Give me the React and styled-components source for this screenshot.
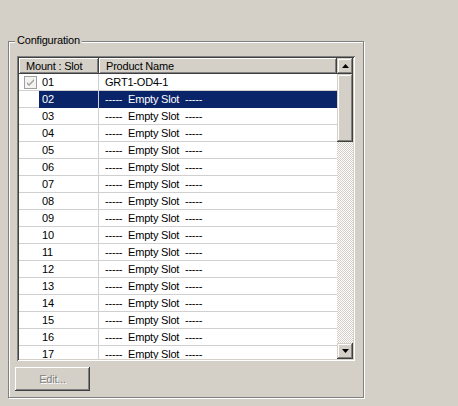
import React from "react";
import styled, { createGlobalStyle } from "styled-components";

const GlobalStyle = createGlobalStyle`
  html, body {
    margin: 0;
    padding: 0;
    background: #d4d0c8;
    width: 458px;
    height: 406px;
    overflow: hidden;
  }
  body {
    font-family: Tahoma, "Liberation Sans", Arial, sans-serif;
    font-size: 11px;
    letter-spacing: -0.2px;
    color: #000;
  }
`;

const slots = [
  { slot: "01", name: "GRT1-OD4-1", checked: true },
  ...Array.from({ length: 16 }, (_, i) => ({
    slot: String(i + 2).padStart(2, "0"),
    name: "-----  Empty Slot  -----",
  })),
];

const raised = `
  box-shadow: inset -1px -1px #404040, inset 1px 1px #d4d0c8,
    inset -2px -2px #808080, inset 2px 2px #fff;
`;

export default function App() {
  const selected = "02";

  return (
    <S.Page>
      <GlobalStyle />
      <S.GroupBox>
        <S.GroupLabel>Configuration</S.GroupLabel>
        <S.ListView>
          <S.ListBody>
            <S.HeaderRow>
              <S.HeaderCell>Mount : Slot</S.HeaderCell>
              <S.HeaderCell>Product Name</S.HeaderCell>
            </S.HeaderRow>
            {slots.map((s) => (
              <S.Row key={s.slot}>
                <S.SlotCell>
                  <S.StateBox>
                    {s.checked && (
                      <svg width="13" height="13" viewBox="0 0 13 13">
                        <rect x="0.5" y="0.5" width="12" height="12" fill="#f4f3f0" stroke="#a0a0a0" />
                        <path d="M3 6 L5 8 L10 3 L10 5 L5 10 L3 8 Z" fill="#a0a0a0" />
                      </svg>
                    )}
                  </S.StateBox>
                  <S.SlotText $selected={s.slot === selected}>{s.slot}</S.SlotText>
                </S.SlotCell>
                <S.NameCell $selected={s.slot === selected}>{s.name}</S.NameCell>
              </S.Row>
            ))}
          </S.ListBody>
          <S.ScrollBar>
            <S.ScrollButton>
              <svg width="7" height="4" viewBox="0 0 7 4">
                <path d="M3.5 0 L7 4 L0 4 Z" fill="#000" />
              </svg>
            </S.ScrollButton>
            <S.Track>
              <S.Thumb />
            </S.Track>
            <S.ScrollButton>
              <svg width="7" height="4" viewBox="0 0 7 4">
                <path d="M0 0 L7 0 L3.5 4 Z" fill="#000" />
              </svg>
            </S.ScrollButton>
          </S.ScrollBar>
        </S.ListView>
        <S.EditButton disabled>Edit...</S.EditButton>
      </S.GroupBox>
    </S.Page>
  );
}

const S = {
  Page: styled.div`
    padding: 41px 0 0 8px;
  `,
  GroupBox: styled.div`
    position: relative;
    box-sizing: border-box;
    width: 356px;
    height: 357px;
    border: 1px solid #808080;
    box-shadow: inset 1px 1px #fff, 1px 1px #fff;
    padding-top: 14px;
    display: flex;
    flex-direction: column;
    align-items: flex-start;
  `,
  GroupLabel: styled.div`
    position: absolute;
    top: -8px;
    left: 6px;
    padding: 0 2px;
    background: #d4d0c8;
    line-height: 13px;
  `,
  ListView: styled.div`
    box-sizing: border-box;
    margin-left: 8px;
    width: 338px;
    height: 305px;
    display: flex;
    background: #fff;
    box-shadow: inset 1px 1px #808080, inset -1px -1px #fff,
      inset 2px 2px #404040, inset -2px -2px #d4d0c8;
    padding: 2px;
  `,
  ListBody: styled.div`
    flex: 1;
    overflow: hidden;
    display: flex;
    flex-direction: column;
  `,
  HeaderRow: styled.div`
    display: grid;
    grid-template-columns: 80px 1fr;
    height: 16px;
    flex-shrink: 0;
  `,
  HeaderCell: styled.div`
    background: #d4d0c8;
    box-shadow: inset -1px -1px #404040, inset 1px 1px #fff,
      inset -2px -2px #808080;
    padding-left: 7px;
    line-height: 16px;
    white-space: nowrap;
    overflow: hidden;
  `,
  Row: styled.div`
    display: grid;
    grid-template-columns: 80px 1fr;
    height: 17px;
    flex-shrink: 0;
    box-sizing: border-box;
    border-bottom: 1px solid #d0d0d0;
  `,
  SlotCell: styled.div`
    display: flex;
    border-right: 1px solid #d0d0d0;
  `,
  StateBox: styled.div`
    width: 20px;
    flex-shrink: 0;
    display: flex;
    align-items: center;
    padding-left: 5px;
    box-sizing: border-box;
    svg {
      display: block;
    }
  `,
  SlotText: styled.div`
    flex: 1;
    padding-left: 3px;
    line-height: 17px;
    background: ${(p) => (p.$selected ? "#0a246a" : "transparent")};
    color: ${(p) => (p.$selected ? "#fff" : "#000")};
  `,
  NameCell: styled.div`
    padding-left: 6px;
    line-height: 17px;
    white-space: pre;
    background: ${(p) => (p.$selected ? "#0a246a" : "transparent")};
    color: ${(p) => (p.$selected ? "#fff" : "#000")};
  `,
  ScrollBar: styled.div`
    width: 16px;
    display: flex;
    flex-direction: column;
  `,
  ScrollButton: styled.div`
    height: 16px;
    flex-shrink: 0;
    background: #d4d0c8;
    ${raised}
    display: flex;
    align-items: center;
    justify-content: center;
    svg {
      display: block;
    }
  `,
  Track: styled.div`
    flex: 1;
    background-image: repeating-conic-gradient(#d4d0c8 0 25%, #fff 0 50%);
    background-size: 2px 2px;
  `,
  Thumb: styled.div`
    height: 68px;
    background: #d4d0c8;
    ${raised}
  `,
  EditButton: styled.button`
    margin: 6px 0 0 6px;
    width: 75px;
    height: 24px;
    border: none;
    background: #d4d0c8;
    box-shadow: inset -1px -1px #404040, inset 1px 1px #fff,
      inset -2px -2px #808080;
    font-family: Tahoma, "Liberation Sans", Arial, sans-serif;
    font-size: 11px;
    letter-spacing: -0.2px;
    color: #808080;
    text-shadow: 1px 1px #fff;
    padding: 0;
  `,
};
